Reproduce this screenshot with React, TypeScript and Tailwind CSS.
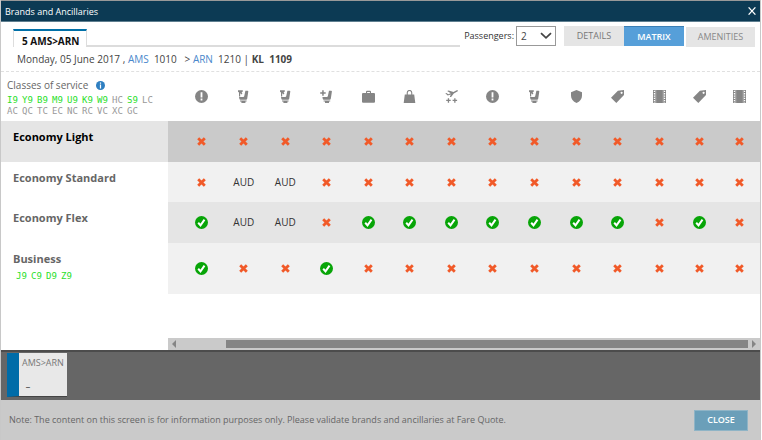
import type { ReactNode } from 'react';
import { clsx } from 'clsx';

type Status = 'no' | 'yes' | 'AUD';
type IconName = 'alert' | 'seat' | 'seatPlus' | 'case' | 'bag' | 'plane' | 'shield' | 'tag' | 'film';

const iconPaths: Record<IconName, ReactNode> = {
  alert: (
    <>
      <circle cx="6.5" cy="6.5" r="6.5" />
      <path fill="#fff" d="M5.6 2.2h1.8v5.4H5.6zM5.6 8.6h1.8v2H5.6z" />
    </>
  ),
  seat: (
    <>
      <path d="M1 .2h4.8v1.2L4.6 2.6l.8 1-.8.8-1.4-1.2v3.2H2V2.6L1 1.8z" />
      <path d="M8.4.8h2.2q.8 0 .7.8l-1.1 7.2q-.2 1-1.2 1H3.4q-.8 0-1-.8L2 7h4.2q.8 0 1-.8z" />
      <path d="M3 10.4h6.6v1.1H8.4V13H4.4v-1.5H3z" />
    </>
  ),
  seatPlus: (
    <>
      <path d="M2.2.3h1.5v2h2v1.5h-2v2H2.2v-2h-2V2.3h2z" />
      <path d="M9 .8h2.2q.8 0 .7.8l-1.1 7.2q-.2 1-1.2 1H3.8q-.8 0-1-.8L2.4 7h4.4q.8 0 1-.8z" />
      <path d="M3.6 10.4h6.6v1.1H9V13H5v-1.5H3.6z" />
    </>
  ),
  case: (
    <path d="M4 3V1.5L4.7.8h3.6l.7.7V3h3.3l.7.8V12l-.7.8H.7L0 12V3.8L.7 3zm1.1 0h2.8V1.9H5.1z" fillRule="evenodd" />
  ),
  bag: (
    <path d="M1.8 4.5h1.9V2.7a2.8 2.8 0 0 1 5.6 0v1.8h1.9L12.3 13H.7zM4.8 4.5h3.4V2.8a1.7 1.7 0 0 0-3.4 0z" fillRule="evenodd" />
  ),
  plane: (
    <>
      <path d="M.3 3.2 1.4 3l1.9 1.2 2.4-1L2.2 1l1.4-.5 4.9 1.5L11.2.6c1.5-.7 2.4.1 1.1 1L8.8 3.4 6.1 7H4.8l1-2.4-3.1 1z" />
      <path d="M2.8 8.2h1.3v1.6h1.6V11H4.1v1.8H2.8V11H1.2V9.8h1.6zM9.2 8.2h1.3v1.6h1.6V11h-1.6v1.8H9.2V11H7.6V9.8h1.6z" />
    </>
  ),
  shield: <path d="M6.5 0 12 2.2v3.6c0 3.2-2.1 5.7-5.5 7.2C3.1 11.5 1 9 1 5.8V2.2z" />,
  tag: (
    <path d="M13 0v5L5.3 13 0 7.8 6.9.8zM10.6 1.7a1.1 1.1 0 1 0 0 2.2 1.1 1.1 0 0 0 0-2.2z" fillRule="evenodd" />
  ),
  film: (
    <>
      <path d="M0 0h13v13H0z" />
      <path stroke="#fff" strokeWidth="1.4" strokeDasharray="1.3 1" d="M1.5.8v12M11.5.8v12" />
      <path stroke="#d8d8d8" strokeWidth=".5" d="M2.8 0v13M10.2 0v13" />
    </>
  ),
};

const services: { icon: IconName; label: string }[] = [
  { icon: 'alert', label: 'Notice' },
  { icon: 'seat', label: 'Seat' },
  { icon: 'seat', label: 'Preferred seat' },
  { icon: 'seatPlus', label: 'Extra legroom' },
  { icon: 'case', label: 'Checked bag' },
  { icon: 'bag', label: 'Hand bag' },
  { icon: 'plane', label: 'Flight extras' },
  { icon: 'alert', label: 'Changes' },
  { icon: 'seat', label: 'Seat selection' },
  { icon: 'shield', label: 'Insurance' },
  { icon: 'tag', label: 'Offers' },
  { icon: 'film', label: 'Entertainment' },
  { icon: 'tag', label: 'Discounts' },
  { icon: 'film', label: 'Movies' },
];

const no = (count: number): Status[] => Array.from({ length: count }, () => 'no');
const yes = (count: number): Status[] => Array.from({ length: count }, () => 'yes');

const brands: { name: string; codes?: string[]; cells: Status[] }[] = [
  { name: 'Economy Light', cells: no(14) },
  { name: 'Economy Standard', cells: ['no', 'AUD', 'AUD', ...no(11)] },
  { name: 'Economy Flex', cells: ['yes', 'AUD', 'AUD', 'no', ...yes(7), 'no', 'yes', 'no'] },
  { name: 'Business', codes: ['J9', 'C9', 'D9', 'Z9'], cells: ['yes', 'no', 'no', 'yes', ...no(10)] },
];

const classCodes = [
  ['I9', 'Y9', 'B9', 'M9', 'U9', 'K9', 'W9', 'HC', 'S9', 'LC'],
  ['AC', 'QC', 'TC', 'EC', 'NC', 'RC', 'VC', 'XC', 'GC'],
];

const rowStyles = [
  { height: 'h-[41px]', name: 'bg-[#e5e5e5] text-black', cells: 'bg-[#cacaca]' },
  { height: 'h-10', name: 'text-[#666]', cells: 'bg-[#f1f1f1]' },
  { height: 'h-[41px]', name: 'text-[#666]', cells: 'bg-[#e5e5e5]' },
  { height: 'h-[51px]', name: 'text-[#666]', cells: 'bg-[#f1f1f1]' },
];

function CodeRow({ codes }: { codes: string[] }) {
  return (
    <div className="flex font-['DejaVu_Sans_Mono',monospace] text-[9px] leading-[11px] font-normal">
      {codes.map((code) => (
        <span key={code} className={clsx('w-[15px]', code.endsWith('9') ? 'text-[#2be02b]' : 'text-[#999]')}>
          {code}
        </span>
      ))}
    </div>
  );
}

function StatusMark({ status }: { status: Status }) {
  if (status === 'AUD') return <span>AUD</span>;
  if (status === 'yes') {
    return (
      <svg viewBox="0 0 13 13" className="mx-auto size-[13px]" role="img" aria-label="Included">
        <circle cx="6.5" cy="6.5" r="6.5" fill="#08a508" />
        <path d="m3.2 6.8 2.3 2.5 4-5.6" fill="none" stroke="#fff" strokeWidth="2" />
      </svg>
    );
  }
  return (
    <svg viewBox="0 0 9 9" className="mx-auto size-[9px]" role="img" aria-label="Not offered">
      <path d="m1.2 1.2 6.6 6.6M7.8 1.2 1.2 7.8" stroke="#f15a29" strokeWidth="2.8" />
    </svg>
  );
}

function Toolbar() {
  return (
    <div className="flex">
      <div className="flex min-w-0 flex-1 pt-[7px] pl-3">
        <button className="h-[18px] border-x border-t-2 border-x-[#ddd] border-t-[#0070a8] pt-1 pr-[6px] pl-2 text-[10px] leading-3 font-bold whitespace-nowrap text-[#111]">
          5 AMS&gt;ARN
        </button>
        <div className="flex-1 border-b-2 border-[#dcdcdc]" />
      </div>
      <div className="flex pt-1 pr-[5px] pl-1">
        <label htmlFor="passengers" className="pr-[2px] text-[9px] leading-5 text-[#333]">
          Passengers:
        </label>
        <div className="relative h-5 w-10">
          <select
            id="passengers"
            defaultValue="2"
            className="block size-full appearance-none border border-[#999] bg-white pl-1 text-[10px] leading-4 text-[#444]"
          >
            <option>1</option>
            <option>2</option>
            <option>3</option>
          </select>
          <svg viewBox="0 0 12 8" className="pointer-events-none absolute top-[6px] right-1 h-2 w-3">
            <path d="m1 1.2 5 4.6 5-4.6" fill="none" stroke="#444" strokeWidth="1.8" />
          </svg>
        </div>
        <div className="flex pl-2 text-[9px] leading-5">
          <button className="h-5 w-[60px] bg-[#e5e5e5] text-[#777]">DETAILS</button>
          <button className="h-5 w-[60px] border-t border-[#3b7fb5] bg-[#569fd9] leading-[18px] font-semibold text-white">MATRIX</button>
          <button className="mt-px ml-[2px] h-5 w-[69px] bg-[#e5e5e5] text-[#888]">AMENITIES</button>
        </div>
      </div>
    </div>
  );
}

function BrandTable() {
  return (
    <table className="w-full table-fixed border-collapse">
      <colgroup>
        <col className="w-[167px]" />
        <col className="w-[55px]" />
        {Array.from({ length: 11 }).map((_, i) => (
          <col key={i} />
        ))}
        <col className="w-[39px]" />
        <col className="w-[41px]" />
      </colgroup>
      <thead>
        <tr className="h-[49px]">
          <th className="p-0 pt-[5px] pl-[6px] text-left align-top font-normal">
            <div className="flex items-center gap-2 pb-[2px] text-[10px] leading-4 text-[#666]">
              Classes of service
              <svg viewBox="0 0 9 9" className="size-[9px]">
                <circle cx="4.5" cy="4.5" r="4.5" fill="#2f7fc1" />
                <path fill="#fff" d="M3.9 1.5h1.2v1.2H3.9zM3.9 3.5h1.2v4H3.9z" />
              </svg>
            </div>
            {classCodes.map((codes) => (
              <CodeRow key={codes[0]} codes={codes} />
            ))}
          </th>
          {services.map(({ icon, label }, i) => (
            <th key={label} className={clsx('p-0 align-middle', i === 0 && 'pl-3')}>
              <svg viewBox="0 0 13 13" className="mx-auto size-[13px]" fill="#858585" role="img" aria-label={label}>
                {iconPaths[icon]}
              </svg>
            </th>
          ))}
        </tr>
      </thead>
      <tbody>
        {brands.map((brand, row) => (
          <tr key={brand.name} className={rowStyles[row].height}>
            <th className={clsx('p-0 pt-2 pl-3 text-left align-top text-[11px] leading-4 font-bold', rowStyles[row].name)}>
              {brand.name}
              {brand.codes && (
                <div className="pt-1 pl-[3px]">
                  <CodeRow codes={brand.codes} />
                </div>
              )}
            </th>
            {brand.cells.map((status, i) => (
              <td
                key={services[i].label}
                className={clsx('p-0 text-center align-middle text-[10px] text-[#333]', rowStyles[row].cells, i === 0 && 'pl-3')}
              >
                <StatusMark status={status} />
              </td>
            ))}
          </tr>
        ))}
      </tbody>
    </table>
  );
}

function Scrollbar() {
  return (
    <div className="ml-[167px] flex h-3 items-center bg-[#cacaca] px-1">
      <button aria-label="Scroll left">
        <svg viewBox="0 0 4 8" className="h-2 w-1" fill="#858585">
          <path d="M4 0v8L0 4z" />
        </svg>
      </button>
      <div className="mr-1 ml-[50px] h-2 flex-1 bg-[#858585]" />
      <button aria-label="Scroll right">
        <svg viewBox="0 0 4 8" className="h-2 w-1" fill="#858585">
          <path d="M0 0v8l4-4z" />
        </svg>
      </button>
    </div>
  );
}

export default function App() {
  return (
    <div className="mr-px border-x border-[#c8c8c8] bg-white font-['Open_Sans',sans-serif]">
      {/* Title bar */}
      <header className="flex h-[22px] items-center justify-between border-t border-b border-t-[#999] border-b-[#5f7f90] bg-[#0c3a54] pr-1 pl-1 text-white">
        <h1 className="pt-px text-[9px] leading-5">Brands and Ancillaries</h1>
        <button aria-label="Close window">
          <svg viewBox="0 0 8 8" className="size-2">
            <path d="m.6.4 6.8 7.2M7.4.4.6 7.6" stroke="#fff" strokeWidth="1.3" />
          </svg>
        </button>
      </header>

      <Toolbar />

      {/* Flight */}
      <div className="flex h-[25px] items-center border-b border-dashed border-[#e0e0e0] pl-4 text-[10px] leading-4 whitespace-pre text-[#444]">
        {'Monday, 05 June 2017 , '}
        <a href="#ams" className="text-[#4a88cc]">AMS</a>
        {'  1010   > '}
        <a href="#arn" className="text-[#4a88cc]">ARN</a>
        {'  1210 | '}
        <b>{'KL  1109'}</b>
      </div>

      <BrandTable />

      <div className="pt-11">
        <Scrollbar />
      </div>

      {/* Selected segments */}
      <div className="border-t-2 border-[#4c4c4c] bg-[#666] pt-px pb-[3px] pl-[6px]">
        <button className="flex h-11 w-[60px] flex-col border-b border-l-12 border-b-[#444] border-l-[#006ca8] bg-[#e8e8e8] pt-[2px] pl-[3px] text-left text-[9px] leading-4 text-[#777]">
          <span>AMS&gt;ARN</span>
          <span className="pt-1 pl-1 text-black">_</span>
        </button>
      </div>

      <footer className="flex h-10 items-center justify-between bg-[#cacaca] pr-3 pl-2">
        <p className="text-[9px] leading-4 text-[#666]">
          Note: The content on this screen is for information purposes only. Please validate brands and ancillaries at Fare Quote.
        </p>
        <button className="h-[21px] w-[54px] border border-[#8fb4c6] bg-[#6b9fb9] text-[9px] leading-4 font-semibold text-white">
          CLOSE
        </button>
      </footer>
    </div>
  );
}
